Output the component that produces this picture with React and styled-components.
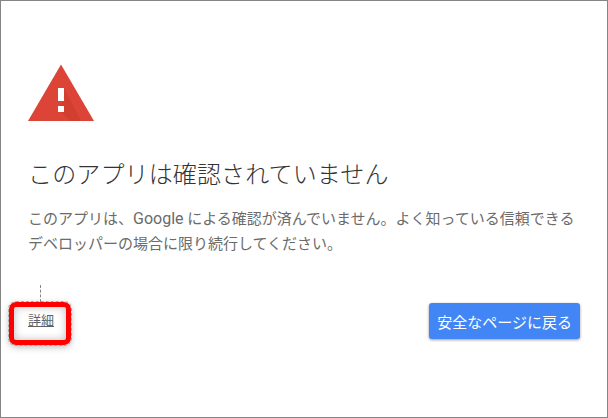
import React from 'react';
import styled, { createGlobalStyle } from 'styled-components';

const Global = createGlobalStyle`
  html, body { margin: 0; padding: 0; background: #fff; }
  * { box-sizing: border-box; }
`;

const Frame = styled.div`
  width: 608px;
  height: 418px;
  border: 1px solid #858585;
  background: #fff;
  padding: 63px 27px 0 27px;
  font-family: Roboto, "Noto Sans CJK JP", sans-serif;
  overflow: hidden;
`;

const WarningIcon = styled.svg`
  display: block;
  width: 66px;
  height: 58px;
`;

const Title = styled.h1`
  margin: 37px 0 0;
  font-size: 24px;
  line-height: 32px;
  font-weight: 300;
  letter-spacing: 0.13px;
  color: #333;
  white-space: nowrap;
`;

const Message = styled.p`
  margin: 16px 0 0;
  font-size: 15px;
  line-height: 25px;
  font-weight: 400;
  color: #6b6b6b;
  white-space: nowrap;
`;

const BrandName = styled.span`
  font-size: 16px;
  line-height: 1;
`;

const Actions = styled.div`
  display: flex;
  justify-content: space-between;
  align-items: center;
  margin-top: 46px;
`;

const DetailsLink = styled.a`
  position: relative;
  font-size: 13px;
  line-height: 20px;
  color: #5f6368;
  text-decoration: underline;
`;

const Highlight = styled.span`
  position: absolute;
  left: -19px;
  top: -9px;
  width: 62px;
  height: 43px;
  border: 5px solid #ff0000;
  border-radius: 7px;
  outline: 1px dashed #aaa;
  box-shadow: 0 2px 7px rgba(0, 0, 0, 0.28), inset 0 0 9px rgba(0, 0, 0, 0.26);
`;

const Leader = styled.span`
  position: absolute;
  left: 12px;
  top: -26px;
  height: 17px;
  border-left: 1px dashed #888;
`;

const BackButton = styled.button`
  height: 36px;
  padding: 0 8px;
  border: 0;
  border-radius: 3px;
  background: #4285f4;
  color: #fff;
  font-family: inherit;
  font-size: 15px;
  box-shadow: 0 1px 3px rgba(0, 0, 0, 0.4);
`;

export default function App() {
  return (
    <Frame>
      <Global />
      <WarningIcon viewBox="0 0 66 58" aria-hidden="true">
        <path d="M33 0.5 L66 57 L0 57 Z" fill="#db4437" />
        <path d="M36 24 L53 57 L42 57 L30 44 L36 37 Z" fill="#c53929" opacity="0.45" />
        <rect x="30" y="24" width="6" height="13" fill="#fff" />
        <rect x="30" y="42" width="6" height="6" fill="#fff" />
      </WarningIcon>
      <Title>このアプリは確認されていません</Title>
      <Message>
        このアプリは、<BrandName>Google</BrandName> による確認が済んでいません。よく知っている信頼できる
        <br />
        デベロッパーの場合に限り続行してください。
      </Message>
      <Actions>
        <DetailsLink>
          詳細
          <Highlight />
          <Leader />
        </DetailsLink>
        <BackButton>安全なページに戻る</BackButton>
      </Actions>
    </Frame>
  );
}
